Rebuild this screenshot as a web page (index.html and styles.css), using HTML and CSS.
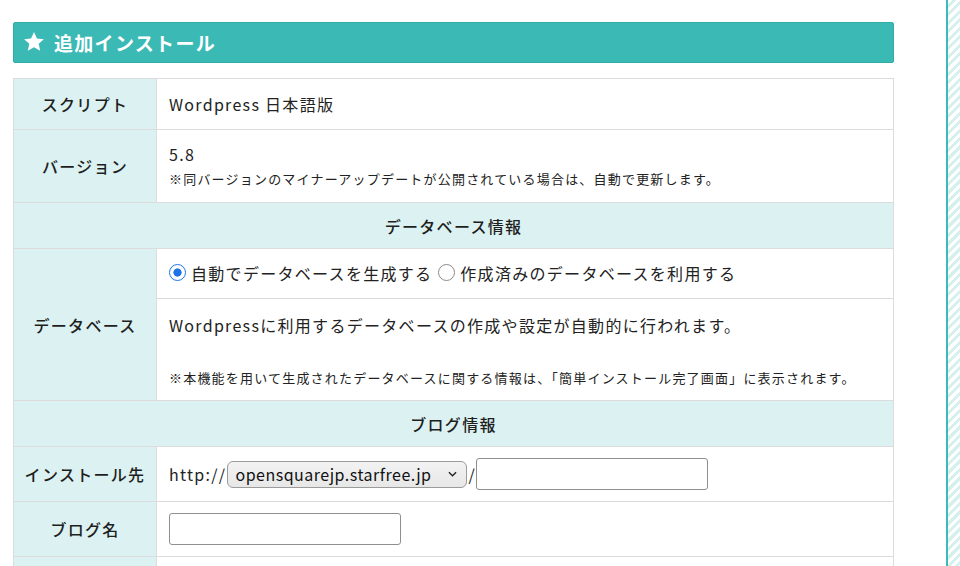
FILE: index.html
```html
<!DOCTYPE html>
<html lang="ja">
<head>
<meta charset="utf-8">
<title>追加インストール</title>
<link rel="stylesheet" href="styles.css">
</head>
<body>
<div class="page">
  <main class="main">
    <h2 class="title">
      <svg class="star" viewBox="0 0 24 24" width="22" height="22"><path d="M12 1l3.2 7.1 7.6.8-5.7 5.1 1.7 7.6L12 17.7l-6.8 3.9 1.7-7.6-5.7-5.1 7.6-.8z" fill="#fff"/></svg>
      <span>追加インストール</span>
    </h2>
    <table class="form">
      <tr class="r-script">
        <th class="label">スクリプト</th>
        <td class="val">Wordpress 日本語版</td>
      </tr>
      <tr class="r-version">
        <th class="label">バージョン</th>
        <td class="val"><div class="ver">5.8</div><div class="note">※同バージョンのマイナーアップデートが公開されている場合は、自動で更新します。</div></td>
      </tr>
      <tr class="r-section">
        <th class="section" colspan="2">データベース情報</th>
      </tr>
      <tr class="r-radio">
        <th class="label" rowspan="2">データベース</th>
        <td class="val">
          <label class="radio"><span class="rb on"></span>自動でデータベースを生成する</label>
          <label class="radio"><span class="rb"></span>作成済みのデータベースを利用する</label>
        </td>
      </tr>
      <tr class="r-desc">
        <td class="val desc"><div>Wordpressに利用するデータベースの作成や設定が自動的に行われます。</div><div class="note">※本機能を用いて生成されたデータベースに関する情報は、「簡単インストール完了画面」に表示されます。</div></td>
      </tr>
      <tr class="r-section">
        <th class="section" colspan="2">ブログ情報</th>
      </tr>
      <tr class="r-input">
        <th class="label">インストール先</th>
        <td class="val"><div class="url">http://<span class="select">opensquarejp.starfree.jp<svg class="chev" viewBox="0 0 10 6" width="9" height="6"><path d="M1 1l4 4 4-4" fill="none" stroke="#222" stroke-width="1.5"/></svg></span><span class="slash">/</span><span class="text"></span></div></td>
      </tr>
      <tr class="r-input">
        <th class="label">ブログ名</th>
        <td class="val"><span class="text"></span></td>
      </tr>
      <tr class="r-more">
        <th class="label"></th>
        <td class="val"></td>
      </tr>
    </table>
  </main>
  <aside class="strip"></aside>
</div>
</body>
</html>
```

FILE: styles.css
```css
html, body {
  margin: 0;
  padding: 0;
  background: #fff;
  height: 566px;
  overflow: hidden;
}
body {
  font-family: "Noto Sans CJK JP", "Noto Sans", sans-serif;
  color: #222;
}
.page {
  display: flex;
  height: 566px;
}
.main {
  flex: 1;
  padding: 22px 52px 0 13px;
}
.title {
  margin: 0;
  height: 39px;
  display: flex;
  align-items: center;
  gap: 9px;
  padding-left: 9px;
  background: #3bb9b5;
  border: 1px solid #2fada9;
  border-radius: 2px;
  color: #fff;
  font-size: 19px;
  font-weight: 700;
  letter-spacing: 1.3px;
}
.star { flex: none; margin-top: -1px; }
.form {
  margin-top: 15px;
  width: 881px;
  border-collapse: collapse;
  border: 1px solid #dcdcdc;
  font-size: 16px;
  letter-spacing: 1.3px;
}
.form th, .form td {
  border: 1px solid #dcdcdc;
  padding: 0;
}
.label {
  width: 142px;
  background: #dcf1f1;
  font-weight: 500;
  text-align: center;
  color: #1e1e1e;
}
.section {
  background: #dcf1f1;
  font-weight: 500;
  text-align: center;
  color: #1e1e1e;
}
.val {
  padding-left: 12px !important;
  text-align: left;
}
.r-script { height: 51px; }
.r-version { height: 73px; }
.r-section { height: 46px; }
.r-radio { height: 50px; }
.r-desc { height: 102px; }
.r-input { height: 55px; }
.r-more { height: 20px; }
.ver { line-height: 22px; margin-top: -1px; }
.note {
  font-size: 13px;
  letter-spacing: 1.2px;
  line-height: 18px;
  margin-top: 5px;
}
.desc {
  vertical-align: top;
  padding-top: 14px !important;
}
.desc .note { margin-top: 32px; }
.radio {
  display: inline-flex;
  align-items: center;
  margin-right: 1px;
}
.rb {
  width: 17px;
  height: 17px;
  border: 1.5px solid #8a8a8a;
  border-radius: 50%;
  margin-right: 5px;
  box-sizing: border-box;
  background: #fff;
  display: inline-block;
}
.rb.on {
  border: 1.8px solid #1d74e6;
  background: radial-gradient(circle, #1d74e6 0 3.8px, #fff 4.4px);
}
.url {
  display: flex;
  align-items: center;
}
.select {
  display: inline-flex;
  align-items: center;
  justify-content: space-between;
  box-sizing: border-box;
  width: 240px;
  height: 27px;
  padding: 0 9px 0 7px;
  margin-left: 1px;
  background: linear-gradient(#f3f3f3, #e7e7e7);
  border: 1px solid #9b9b9b;
  border-radius: 6px;
  color: #111;
  letter-spacing: 0.5px;
}
.chev { flex: none; }
.slash { letter-spacing: 0; margin: 0 1px; }
.text {
  display: inline-block;
  box-sizing: border-box;
  width: 232px;
  height: 32px;
  border: 1px solid #8f8f8f;
  border-radius: 3px;
  background: #fff;
  vertical-align: middle;
}
.strip {
  width: 12px;
  flex: none;
  border-left: 2px solid #3cbab6;
  background: repeating-linear-gradient(135deg, #fff 0 3px, #d6f0ef 3px 6px);
}
```
